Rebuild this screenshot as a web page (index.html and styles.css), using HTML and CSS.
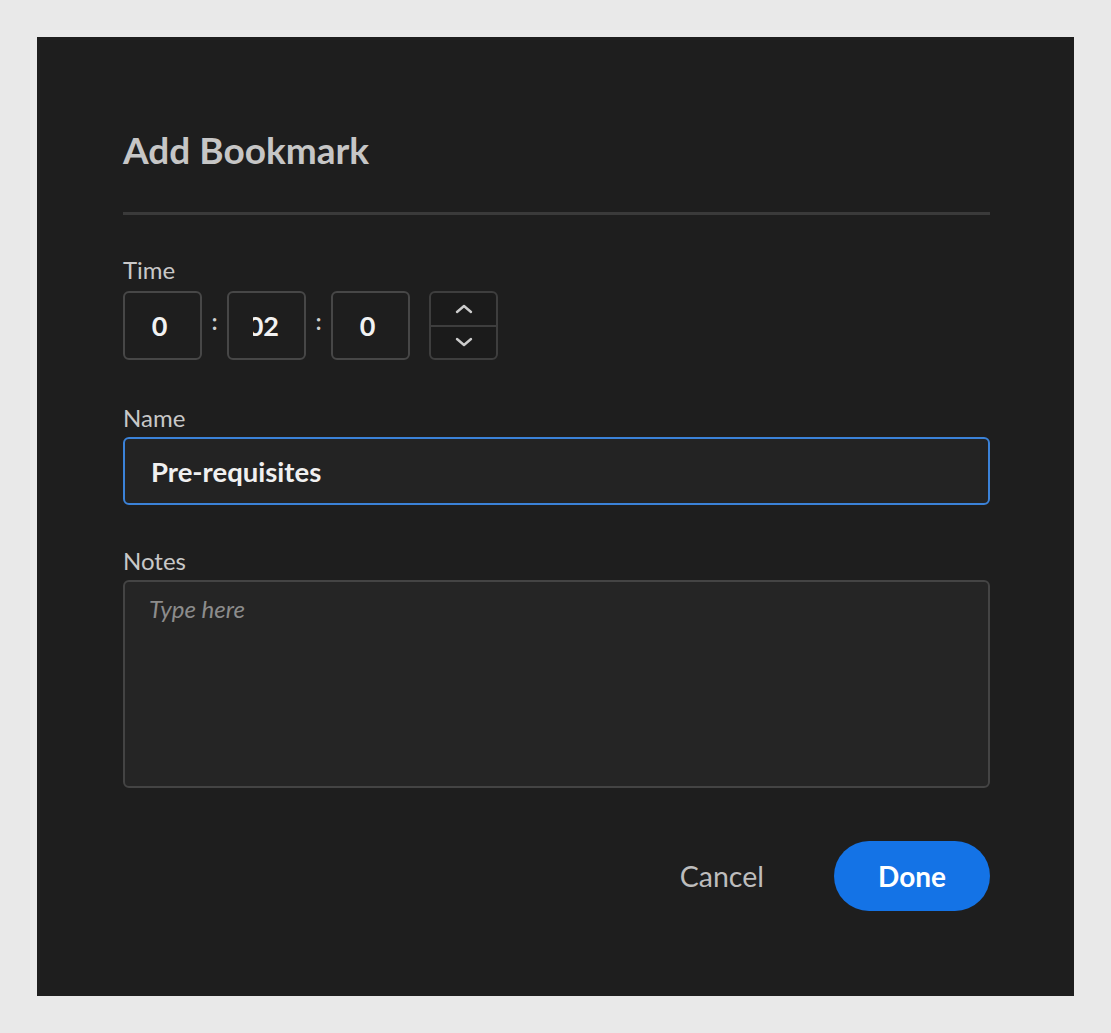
FILE: index.html
```html
<!DOCTYPE html>
<html>
<head>
<meta charset="utf-8">
<link rel="stylesheet" href="styles.css">
</head>
<body>
<div class="dialog">
  <h1 class="title">Add Bookmark</h1>
  <div class="divider"></div>
  <div class="field">
    <div class="label">Time</div>
    <div class="time-row">
      <div class="tbox">0</div>
      <span class="colon">:</span>
      <div class="tbox tbox-mid"><span class="clip"><span>02</span></span></div>
      <span class="colon">:</span>
      <div class="tbox">0</div>
      <div class="spinner">
        <div class="spin-btn">
          <svg width="20" height="12" viewBox="0 0 20 12"><path d="M3 9 L10 3 L17 9" fill="none" stroke="#cccccc" stroke-width="2.4" stroke-linecap="round" stroke-linejoin="round"/></svg>
        </div>
        <div class="spin-btn spin-down">
          <svg width="20" height="12" viewBox="0 0 20 12"><path d="M3 3 L10 9 L17 3" fill="none" stroke="#cccccc" stroke-width="2.4" stroke-linecap="round" stroke-linejoin="round"/></svg>
        </div>
      </div>
    </div>
  </div>
  <div class="field field-name">
    <div class="label label-tight">Name</div>
    <div class="input">Pre-requisites</div>
  </div>
  <div class="field field-notes">
    <div class="label label-tight">Notes</div>
    <div class="textarea"><span class="placeholder">Type here</span></div>
  </div>
  <div class="actions">
    <span class="cancel">Cancel</span>
    <span class="done">Done</span>
  </div>
</div>
</body>
</html>
```
FILE: styles.css
```css
html, body {
  margin: 0;
  padding: 0;
  background: #e9e9e9;
}
body {
  font-family: "Lato", sans-serif;
  padding: 37px 0 0 37px;
}
.dialog {
  box-sizing: border-box;
  width: 1037px;
  height: 959px;
  background: #1e1e1e;
  padding: 93px 84px 0 86px;
  color: #cfcfcf;
}
.title {
  margin: 0;
  font-family: "Lato", sans-serif;
  font-size: 37px;
  font-weight: 700;
  line-height: 40px;
  color: #c6c6c6;
}
.divider {
  margin-top: 42px;
  height: 3px;
  background: #3a3a3a;
}
.field {
  margin-top: 42px;
}
.label {
  font-family: "Lato", sans-serif;
  font-size: 24px;
  line-height: 26px;
  color: #c8c8c8;
  margin-bottom: 8px;
}
.label-tight {
  margin-bottom: 6px;
}
.time-row {
  display: flex;
  align-items: center;
}
.tbox {
  box-sizing: border-box;
  width: 79px;
  height: 69px;
  border: 2px solid #474747;
  border-radius: 6px;
  display: flex;
  align-items: center;
  justify-content: center;
  padding-right: 6px;
  font-family: "Lato", sans-serif;
  font-weight: 700;
  font-size: 27px;
  color: #f2f2f2;
}
.tbox-mid {
  justify-content: flex-start;
  padding-left: 24px;
  padding-right: 0;
}
.clip {
  width: 26px;
  overflow: hidden;
  display: flex;
  justify-content: flex-end;
  white-space: nowrap;
}
.colon {
  width: 25px;
  text-align: center;
  font-family: "Lato", sans-serif;
  font-size: 22px;
  font-weight: 700;
  color: #cfcfcf;
  margin-top: -8px;
}
.spinner {
  box-sizing: border-box;
  margin-left: 19px;
  width: 69px;
  height: 69px;
  border: 2px solid #3e3e3e;
  border-radius: 6px;
  background: #1b1b1b;
  display: flex;
  flex-direction: column;
}
.spin-btn {
  flex: 1;
  display: flex;
  align-items: center;
  justify-content: center;
}
.spin-down {
  border-top: 2px solid #3e3e3e;
}
.field-name {
  margin-top: 45px;
}
.input {
  box-sizing: border-box;
  height: 68px;
  border: 2px solid #3b82d8;
  border-radius: 6px;
  background: #232323;
  padding-left: 26px;
  display: flex;
  align-items: center;
  font-family: "Lato", sans-serif;
  font-weight: 700;
  font-size: 27.5px;
  color: #f0f0f0;
}
.field-notes {
  margin-top: 43px;
}
.textarea {
  box-sizing: border-box;
  height: 208px;
  border: 2px solid #444444;
  border-radius: 6px;
  background: #252525;
  padding: 12px 24px;
}
.placeholder {
  font-family: "Lato", sans-serif;
  font-style: italic;
  font-size: 24px;
  color: #8c8c8c;
}
.actions {
  margin-top: 53px;
  display: flex;
  justify-content: flex-end;
  align-items: center;
}
.cancel {
  font-family: "Lato", sans-serif;
  font-size: 28.5px;
  color: #bdbdbd;
  margin-right: 70px;
}
.done {
  box-sizing: border-box;
  width: 156px;
  height: 70px;
  border-radius: 35px;
  background: #1473e6;
  display: flex;
  align-items: center;
  justify-content: center;
  font-family: "Lato", sans-serif;
  font-weight: 700;
  font-size: 28px;
  color: #ffffff;
}
```
